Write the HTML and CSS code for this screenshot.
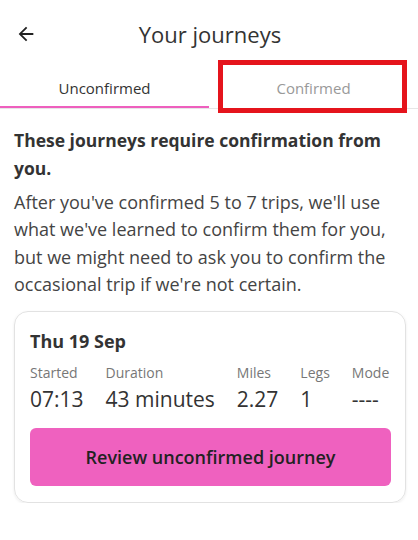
FILE: index.html
```html
<!doctype html>
<html lang="en">
<head>
  <meta charset="utf-8">
  <meta name="viewport" content="width=device-width, initial-scale=1">
  <title>Your journeys</title>
  <link rel="stylesheet" href="styles.css">
</head>
<body>
  <header class="top-bar">
    <button class="back" aria-label="Back">
      <svg width="22" height="22" viewBox="0 0 24 24"><path d="M20 11H7.83l5.59-5.59L12 4l-8 8 8 8 1.41-1.41L7.83 13H20v-2z" fill="#222"/></svg>
    </button>
    <h1>Your journeys</h1>
  </header>

  <nav class="tabs">
    <div class="tab active">Unconfirmed</div>
    <div class="tab">Confirmed<span class="highlight"></span></div>
  </nav>

  <main>
    <h2>These journeys require confirmation from you.</h2>
    <p>After you've confirmed 5 to 7 trips, we'll use what we've learned to confirm them for you, but we might need to ask you to confirm the occasional trip if we're not certain.</p>

    <section class="card">
      <h3>Thu 19 Sep</h3>
      <div class="stats">
        <div><span class="label">Started</span><span class="value">07:13</span></div>
        <div><span class="label">Duration</span><span class="value">43 minutes</span></div>
        <div><span class="label">Miles</span><span class="value">2.27</span></div>
        <div><span class="label">Legs</span><span class="value">1</span></div>
        <div><span class="label">Mode</span><span class="value">----</span></div>
      </div>
      <button class="review">Review unconfirmed journey</button>
    </section>
  </main>
</body>
</html>
```

FILE: styles.css
```css
body {
  margin: 0;
  background-color: white;
  color: #333;
  font-family: "Open Sans", sans-serif;
}
.top-bar {
  display: flex;
  align-items: center;
  height: 68px;
  position: relative;
}
.back {
  background: none;
  border: 0;
  padding: 0;
  margin-left: 15px;
  display: flex;
}
h1 {
  flex-grow: 1;
  text-align: center;
  margin: 0 0 0 -35px;
  font-size: 22px;
  font-weight: 400;
  color: #333;
}
.tabs {
  display: flex;
  border-bottom: 1px solid #e6e6e6;
}
.tab {
  flex: 1;
  height: 40px;
  line-height: 40px;
  text-align: center;
  font-size: 15px;
  color: #999;
  position: relative;
}
.tab.active {
  color: #333;
  box-shadow: inset 0 -2px 0 #ee5fbe;
}
.highlight {
  position: absolute;
  left: 9px;
  right: 11px;
  top: -8px;
  bottom: -5px;
  border: 5px solid #e5141c;
}
main {
  padding: 0 12px 0 14px;
}
h2 {
  font-size: 17.5px;
  line-height: 28px;
  margin: 17px 0 7px;
  color: #333;
}
p {
  font-size: 18px;
  line-height: 27.3px;
  margin: 0 0 13px;
  color: #444;
}
.card {
  border: 1px solid #e2e2e2;
  border-radius: 14px;
  box-shadow: 0 1px 3px rgba(0, 0, 0, .08);
  padding: 17px 14px 16px 15px;
}
h3 {
  margin: 0;
  font-size: 18px;
  color: #333;
}
.stats {
  display: flex;
  gap: 22px;
  margin-top: 10px;
  white-space: nowrap;
}
.stats > div {
  display: flex;
  flex-direction: column;
}
.label {
  font-size: 14px;
  line-height: 20px;
  color: #777;
}
.value {
  font-size: 21px;
  line-height: 32px;
  color: #333;
}
.review {
  display: block;
  width: 100%;
  height: 58px;
  margin-top: 13px;
  background-color: #ef61bf;
  border: 0;
  border-radius: 6px;
  font-family: inherit;
  font-size: 18px;
  font-weight: 600;
  color: #222;
}
```
